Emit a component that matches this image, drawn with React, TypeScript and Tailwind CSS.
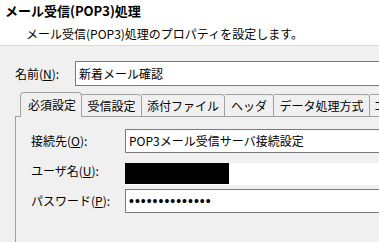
export default function App() {
  const tabs = [
    { label: "受信設定", w: "w-[60px]" },
    { label: "添付ファイル", w: "w-[83px]" },
    { label: "ヘッダ", w: "w-[49px]" },
    { label: "データ処理方式", w: "w-[96px]" },
    { label: "コネクション", w: "w-[80px]" },
  ];
  return (
    <div className="w-[379px] h-[242px] overflow-hidden bg-[#f0f0f0] text-black font-['Noto_Sans_CJK_JP',sans-serif] text-[12px] leading-none">
      <div className="h-[46px] bg-white border-b border-[#dcdcdc]">
        <div className="pl-[5px] h-[20px] flex items-center text-[13px] font-bold">
          メール受信(POP3)処理
        </div>
        <div className="pl-[26px] mt-[7px] h-[14px] flex items-center">
          メール受信(POP3)処理のプロパティを設定します。
        </div>
      </div>

      <div className="mt-[15px] flex items-center h-[25px] pl-[15px]">
        <div className="w-[60px] shrink-0">
          名前(<span className="underline">N</span>):
        </div>
        <div className="h-[25px] w-[330px] shrink-0 bg-white border border-[#7a7a7a] flex items-center pl-[3px]">
          新着メール確認
        </div>
      </div>

      <div className="pl-[15px] mt-[6px]">
        <div className="relative z-10 -mb-px flex items-end h-[25px] pl-[5px]">
          <div className="h-[25px] w-[62px] shrink-0 bg-[#f0f0f0] border-l border-t border-r border-[#a0a0a0] rounded-t-[4px] flex items-center pl-[7px]">
            必須設定
          </div>
          {tabs.map((t) => (
            <div
              key={t.label}
              className={`${t.w} h-[23px] shrink-0 bg-[#f0f0f0] border-t border-r border-b border-[#a0a0a0] rounded-tr-[4px] flex items-center justify-center whitespace-nowrap overflow-hidden`}
            >
              {t.label}
            </div>
          ))}
        </div>
        <div className="h-[140px] border-l border-t border-[#a0a0a0] pl-[15px] pt-[12px]">
          <div className="flex items-center h-[24px]">
            <div className="w-[94px] shrink-0">
              接続先(<span className="underline">O</span>):
            </div>
            <div className="h-[24px] w-[300px] shrink-0 bg-white border border-[#7a7a7a] flex items-center pl-[3px]">
              POP3メール受信サーバ接続設定
            </div>
          </div>
          <div className="flex items-center h-[24px] mt-[6px]">
            <div className="w-[94px] shrink-0">
              ユーザ名(<span className="underline">U</span>):
            </div>
            <div className="h-[22px] mt-[4px] w-[300px] shrink-0 bg-white self-start">
              <div className="h-[21px] w-[104px] bg-black" />
            </div>
          </div>
          <div className="flex items-center h-[24px] mt-[6px]">
            <div className="w-[94px] shrink-0">
              パスワード(<span className="underline">P</span>):
            </div>
            <div className="h-[24px] w-[300px] shrink-0 bg-white border border-[#7a7a7a] flex items-center pl-[3px] font-['Liberation_Sans',sans-serif] text-[14px] tracking-[1px]">
              ••••••••••••••
            </div>
          </div>
        </div>
      </div>
    </div>
  );
}
